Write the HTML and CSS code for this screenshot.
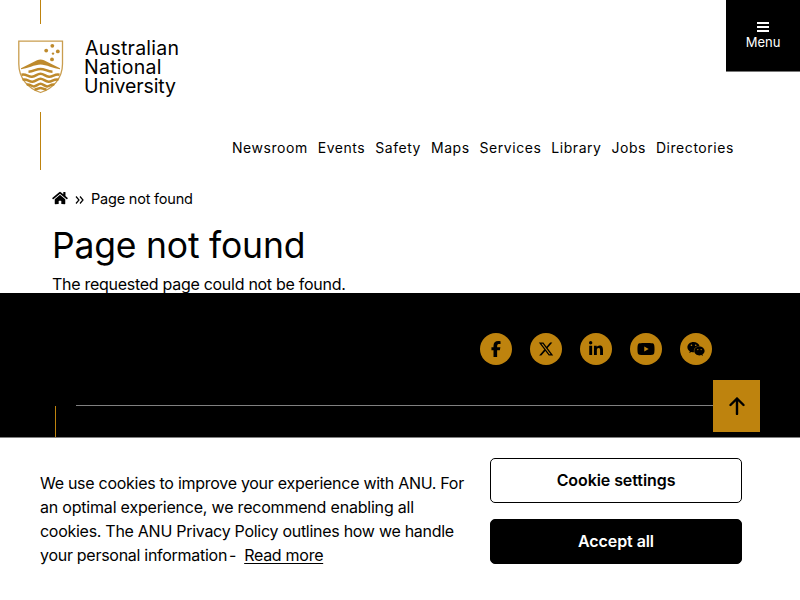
FILE: index.html
```html
<!DOCTYPE html>
<html lang="en">
<head>
<meta charset="utf-8">
<title>Page not found - ANU</title>
<link rel="stylesheet" href="styles.css">
</head>
<body>
<header class="header">
  <div class="brand">
    <i class="rule rule-top"></i>
    <svg class="logo" viewBox="0 0 170 64" role="img" aria-label="Australian National University">
      <path fill="none" stroke-width="1.3" stroke="#c99d4e" d="M.8 7.100H44.500V30C44.500 45 34 55 22.600 58.500C11.200 55 .8 45 .8 30Z"/>
      <g fill="#be8a2c">
        <path d="M3 35.300V34.200L19 26.300Q22.500 24.600 26 26.300L42 34.200V35.300C36 34.800 28 30.600 22.500 30.600S9 34.800 3 35.300Z"/>
        <circle cx="34.300" cy="11.800" r="1.900"/><circle cx="28.200" cy="16.600" r="1.900"/><circle cx="39.800" cy="17.400" r="1.900"/><circle cx="35" cy="19.600" r="1.200"/><circle cx="34" cy="25.400" r="1.900"/>
      </g>
      <g fill="none" stroke="#be8a2c" stroke-width="2.500">
        <path d="M10.500 37.800C16 37.500 18 34.900 22.500 34.900S29 37.500 34.500 37.800"/>
        <path d="M3.500 40.800C8 39.500 10 43 14 42.800C18 42.400 19 39.800 22.500 39.800S27 42.400 31 42.800C35 43 37 39.500 41.500 40.800"/>
        <path d="M4.500 45.700C9 44.500 11 48 14.500 47.800C18 47.400 19.500 44.800 22.500 44.800S27 47.400 30.500 47.800C34 48 36 44.500 40.500 45.700"/>
        <path d="M8.500 50.600C12 49.500 13.500 52.700 16 52.500C18.500 52.200 20 49.700 22.500 49.700S26.500 52.200 29 52.500C31.500 52.700 33 49.500 36.500 50.600"/>
        <path d="M16.500 55.600C19.500 55.400 20.500 54 22.500 54S25.500 55.400 28.500 55.600"/>
      </g>
      <g class="logo-text">
        <text x="67" y="21" textLength="94">Australian</text>
        <text x="66" y="40" textLength="77.500">National</text>
        <text x="66" y="59" textLength="92">University</text>
      </g>
    </svg>
    <i class="rule rule-bottom"></i>
  </div>
  <nav class="links">
    <a>Newsroom</a><a>Events</a><a>Safety</a><a>Maps</a><a>Services</a><a>Library</a><a>Jobs</a><a>Directories</a>
  </nav>
  <button class="menu"><i class="bars"></i><span>Menu</span></button>
</header>
<main class="content">
  <div class="crumbs">
    <svg class="home" viewBox="0 0 576 512"><path d="M280.400 148.300L96 300.100V464a16 16 0 0 0 16 16l112-.3a16 16 0 0 0 16-16V368a16 16 0 0 1 16-16h64a16 16 0 0 1 16 16v95.600a16 16 0 0 0 16 16.100L464 480a16 16 0 0 0 16-16V300L295.700 148.300a12.200 12.200 0 0 0-15.300 0zM571.600 251.500L488 182.600V44a12 12 0 0 0-12-12h-56a12 12 0 0 0-12 12v72.600L318.500 43a48 48 0 0 0-61 0L4.300 251.500a12 12 0 0 0-1.600 16.900l25.500 31A12 12 0 0 0 45.200 301l235.200-193.700a12.200 12.200 0 0 1 15.300 0L530.900 301a12 12 0 0 0 16.900-1.600l25.500-31a12 12 0 0 0-1.700-16.900z"/></svg>
    <svg class="sep" viewBox="0 0 9 8"><path d="M1 .5 4 4 1 7.500M5 .5 8 4 5 7.500"/></svg>
    <span>Page not found</span>
  </div>
  <h1>Page not found</h1>
  <p>The requested page could not be found.</p>
</main>
<footer class="footer">
  <div class="social">
    <a><svg viewBox="0 0 320 512"><path d="M80 299.300V512h116V299.300h86.500l18-97.800H196v-34.600c0-51.700 20.300-71.500 72.700-71.500 16.300 0 29.400.4 37 1.200V7.900C291.400 4 256.400 0 236.200 0 129.300 0 80 50.500 80 159.400v42.100H14v97.800z"/></svg></a>
    <a><svg viewBox="0 0 512 512"><path d="M389.200 48h70.600L305.600 224.200 487 464H345L233.700 318.600 106.500 464H35.800l164.900-188.500L26.800 48h145.600l100.500 132.900zm-24.800 373.800h39.100L151.100 88h-42z"/></svg></a>
    <a><svg viewBox="0 0 448 512"><path d="M100.300 448H7.400V148.900h92.900zM53.800 108.100C24.100 108.100 0 83.500 0 53.800a53.800 53.800 0 0 1 107.600 0c0 29.700-24.100 54.300-53.800 54.300zM447.900 448h-92.700V302.400c0-34.700-.7-79.200-48.300-79.200-48.300 0-55.700 37.700-55.700 76.700V448h-92.800V148.900h89.100v40.800h1.300c12.400-23.500 42.700-48.300 87.900-48.300 94 0 111.300 61.900 111.300 142.300V448z"/></svg></a>
    <a><svg viewBox="0 0 576 512"><path d="M549.700 124.100c-6.300-23.700-24.800-42.300-48.300-48.600C458.800 64 288 64 288 64S117.200 64 74.600 75.500c-23.500 6.300-42 24.900-48.300 48.600C14.900 167 14.900 256.400 14.900 256.400s0 89.400 11.400 132.300c6.300 23.600 24.800 41.500 48.300 47.800C117.200 448 288 448 288 448s170.800 0 213.400-11.500c23.500-6.300 42-24.200 48.300-47.800 11.400-42.900 11.400-132.300 11.400-132.300s0-89.400-11.400-132.300zM232.200 337.600V175.200l142.700 81.200z"/></svg></a>
    <a><svg viewBox="0 0 576 512"><path d="M385.200 167.600c6.400 0 12.600.3 18.800 1.100C387.400 90.300 303.300 32 207.700 32 100.500 32 13 104.800 13 197.400c0 53.400 29.300 97.500 77.900 131.600l-19.300 58.600 68-34.100c24.400 4.800 43.800 9.700 68.200 9.700 6.200 0 12.100-.3 18.300-.8-4-12.900-6.200-26.600-6.200-40.800-.1-84.900 72.900-154 165.300-154zm-104.500-52.900c14.500 0 24.200 9.700 24.200 24.400 0 14.500-9.700 24.200-24.200 24.200-14.800 0-29.300-9.700-29.300-24.200.1-14.700 14.600-24.400 29.300-24.400zm-136.400 48.600c-14.500 0-29.300-9.700-29.300-24.200 0-14.800 14.800-24.400 29.300-24.400 14.800 0 24.400 9.700 24.400 24.400 0 14.600-9.600 24.200-24.400 24.200zM563 319.400c0-77.900-77.900-141.300-165.400-141.300-92.700 0-165.400 63.400-165.400 141.300S305 460.700 397.600 460.700c19.300 0 38.900-5.100 58.600-9.900l53.400 29.300-14.800-48.600C534 402.100 563 363.200 563 319.400zm-219.100-24.500c-9.700 0-19.300-9.700-19.300-19.600 0-9.700 9.700-19.300 19.300-19.300 14.800 0 24.400 9.700 24.400 19.300 0 10-9.700 19.600-24.400 19.600zm107.100 0c-9.700 0-19.300-9.700-19.300-19.600 0-9.700 9.700-19.300 19.300-19.300 14.500 0 24.400 9.700 24.400 19.300.1 10-9.900 19.600-24.400 19.600z"/></svg></a>
  </div>
  <div class="footer-lines"><i class="vline"></i><i class="hline"></i></div>
</footer>
<a class="to-top"><svg viewBox="0 0 16 18"><path d="M8 17V1.500M1.500 8 8 1.500 14.500 8"/></svg></a>
<section class="cookies">
  <p class="cookie-text">
    <span>We use cookies to improve your experience with ANU. For</span>
    <span class="second">an optimal experience, we recommend enabling all</span>
    <span>cookies. The ANU Privacy Policy outlines how we handle</span>
    <span class="last">your personal information<i>-</i><a>Read more</a></span>
  </p>
  <div class="actions">
    <button>Cookie settings</button>
    <button class="accept">Accept all</button>
  </div>
</section>
</body>
</html>
```
FILE: styles.css
```css
* { box-sizing: border-box; }
body { margin: 0; height: 600px; overflow: hidden; background: #fff; color: #000; font-family: Inter, "Liberation Sans", sans-serif; font-size: 16px; letter-spacing: -.28px; }
h1, p { margin: 0; font-weight: 400; white-space: nowrap; }
button { font-family: inherit; color: inherit; padding: 0; }

.header { display: grid; grid-template-columns: 232px 494px 74px; height: 170px; }
.brand { display: flex; flex-direction: column; }
.rule { width: 1px; margin-left: 40px; background: #be830e; }
.rule-top { height: 24px; }
.rule-bottom { height: 58px; margin-top: 14px; }
.logo { width: 170px; height: 64px; margin: 10px 0 0 18px; overflow: visible; }
.logo-text { font-size: 19.500px; letter-spacing: 0; }
.links { display: flex; justify-content: space-between; align-self: end; width: 502px; height: 32px; font-size: 14px; letter-spacing: .55px; line-height: 20px; }
.menu { display: flex; flex-direction: column; align-items: center; height: 72px; padding-top: 22px; border: 0; border-bottom: 1px solid #777; background: #000; color: #fff; font-size: 13px; line-height: 16px; letter-spacing: 0; }
.bars { width: 12px; height: 10px; margin-bottom: 2px; border-top: 2px solid; border-bottom: 2px solid; background: linear-gradient(currentColor, currentColor) center / 100% 2px no-repeat; }

.content { height: 123px; padding: 18px 52px 0; }
.crumbs { display: flex; align-items: center; height: 20px; font-size: 14.500px; letter-spacing: -.2px; }
.home { width: 16px; height: 14px; }
.sep { width: 9px; height: 8px; margin: 3px 7px 0 7px; fill: none; stroke: #000; stroke-width: 1.2; }
h1 { margin-top: 17px; font-size: 35.500px; line-height: 42px; letter-spacing: -.2px; }
.content p { margin-top: 5px; line-height: 24px; letter-spacing: -.28px; }

.footer { height: 144px; padding-top: 40px; background: #000; }
.social { display: flex; gap: 18px; margin-left: 480px; }
.social a { display: grid; place-items: center; width: 32px; height: 32px; border-radius: 50%; background: #be830e; }
.social svg { height: 16px; }
.footer-lines { display: flex; gap: 20px; margin: 40px 0 0 55px; }
.vline { width: 1px; height: 31px; margin-top: 1px; background: #be830e; }
.hline { width: 648px; height: 1px; background: #808080; }
.to-top { position: absolute; left: 713px; top: 380px; display: grid; place-items: center; width: 47px; height: 52px; background: #be830e; }
.to-top svg { width: 16px; height: 18px; fill: none; stroke: #000; stroke-width: 2.4; stroke-linecap: round; stroke-linejoin: round; }

.cookies { display: flex; height: 163px; padding: 20px 58px 0 40px; border-top: 1px solid #808080; background: #fff; }
.cookie-text { width: 450px; padding-top: 13px; line-height: 24px; }
.cookie-text span { display: block; }
.cookie-text .second { letter-spacing: -.2px; }
.cookie-text i { font-style: normal; margin: 0 8px 0 2px; }
.cookie-text a { text-decoration: underline; text-underline-offset: 2px; }
.actions { display: flex; flex-direction: column; gap: 16px; width: 252px; }
.actions button { height: 45px; padding-bottom: 2px; border: 1px solid #000; border-radius: 5px; background: #fff; font-size: 16px; font-weight: 600; letter-spacing: -.08px; }
.actions .accept { background: #000; color: #fff; }
```
